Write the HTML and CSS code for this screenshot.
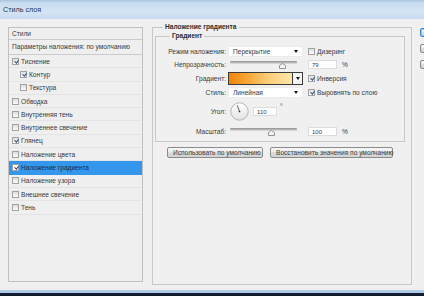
FILE: index.html
```html
<!DOCTYPE html>
<html>
<head>
<meta charset="utf-8">
<title>Стиль слоя</title>
<link rel="stylesheet" href="styles.css">
</head>
<body>
<div class="window">
	<div class="titlebar">Стиль слоя</div>

	<div class="content">
		<div class="styles-list">
			<div class="list-head">Стили</div>
			<div class="list-head params">Параметры наложения: по умолчанию</div>
			<div class="item"><span class="chk on"></span>Тиснение</div>
			<div class="item sub"><span class="chk on"></span>Контур</div>
			<div class="item sub"><span class="chk"></span>Текстура</div>
			<div class="item"><span class="chk"></span>Обводка</div>
			<div class="item"><span class="chk"></span>Внутренняя тень</div>
			<div class="item"><span class="chk"></span>Внутреннее свечение</div>
			<div class="item"><span class="chk on"></span>Глянец</div>
			<div class="item"><span class="chk"></span>Наложение цвета</div>
			<div class="item selected"><span class="chk on"></span>Наложение градиента</div>
			<div class="item"><span class="chk"></span>Наложение узора</div>
			<div class="item"><span class="chk"></span>Внешнее свечение</div>
			<div class="item"><span class="chk"></span>Тень</div>
		</div>

		<fieldset class="group">
			<legend>Наложение градиента</legend>
			<fieldset class="group inner">
				<legend>Градиент</legend>
				<div class="form">
					<span class="lbl">Режим наложения:</span>
					<div class="select">Перекрытие</div>
					<div class="opt"><span class="chk"></span>Дизеринг</div>

					<span class="lbl">Непрозрачность:</span>
					<div class="slider"><svg class="thumb" style="left: 79%" viewBox="0 0 7 6"><path d="M0.5 5.5V2.5L3.5 0.5L6.5 2.5V5.5Z"/></svg></div>
					<div class="num"><span class="field">79</span>%</div>

					<span class="lbl">Градиент:</span>
					<div class="gradient"><span class="swatch"></span><span class="drop"></span></div>
					<div class="opt"><span class="chk on"></span>Инверсия</div>

					<span class="lbl">Стиль:</span>
					<div class="select">Линейная</div>
					<div class="opt"><span class="chk on"></span>Выровнять по слою</div>

					<span class="lbl">Угол:</span>
					<div class="angle">
						<svg class="dial" viewBox="0 0 20 20">
							<defs>
								<linearGradient id="dialfill" x1="0" y1="0" x2="0" y2="1">
									<stop offset="0" stop-color="#ffffff"/>
									<stop offset="1" stop-color="#e2e2e2"/>
								</linearGradient>
							</defs>
							<circle cx="10" cy="10" r="9.2" fill="url(#dialfill)" stroke="#a2a2a2" stroke-width="0.8"/>
							<line x1="10" y1="10" x2="7.6" y2="3.4" stroke="#333" stroke-width="0.8"/>
							<circle cx="10" cy="10" r="0.9" fill="#333"/>
						</svg>
						<span class="field">110</span><span class="deg">°</span>
					</div>
					<span></span>

					<span class="lbl">Масштаб:</span>
					<div class="slider"><svg class="thumb" style="left: 62%" viewBox="0 0 7 6"><path d="M0.5 5.5V2.5L3.5 0.5L6.5 2.5V5.5Z"/></svg></div>
					<div class="num"><span class="field">100</span>%</div>
				</div>
			</fieldset>

			<div class="buttons">
				<div class="btn">Использовать по умолчанию</div>
				<div class="btn">Восстановить значения по умолчанию</div>
			</div>
		</fieldset>

		<!-- OK / cancel column, cut off by the window edge -->
		<div class="side">
			<div class="btn focus"></div>
			<div class="btn"></div>
			<div class="btn"></div>
		</div>
	</div>

	<div class="frame-bottom"></div>
</div>
</body>
</html>
```

FILE: styles.css
```css
* {
	box-sizing: border-box;
}

html, body {
	margin: 0;
	padding: 0;
}

body {
	width: 424px;
	height: 296px;
	overflow: hidden;
	background: #f0f0f0;
	color: #3a3a3a;
	font-family: "Liberation Sans", Arial, sans-serif;
	font-size: 6.6px;
}

.window {
	display: flex;
	flex-direction: column;
	height: 296px;
}

.titlebar {
	flex: none;
	height: 20px;
	padding-left: 3px;
	line-height: 19px;
	font-size: 7.2px;
	color: #24364a;
	background: linear-gradient(#a9c3dc, #c8dcef 15%, #d3e4f4 60%, #cadcef);
	border-bottom: 1px solid #eaf0f6;
}

.content {
	flex: 1;
	display: flex;
	align-items: flex-start;
	gap: 8px;
	padding: 3px 0 0 8px;
	overflow: hidden;
}

.frame-bottom {
	flex: none;
	height: 6px;
	background: linear-gradient(#b6d0ea 0, #a9c6e4 50%, #16243a 50%, #0d1828);
}

/* left list */

.styles-list {
	flex: none;
	width: 135px;
	height: 255px;
	margin: 4px 1px 0 0;
	border: 1px solid #c0c0c0;
	background: #efefef;
}

.list-head {
	height: 12px;
	padding-left: 3px;
	line-height: 11px;
	border-bottom: 1px solid #cbcbcb;
}

.list-head.params {
	height: 15px;
	line-height: 14px;
}

.item {
	display: flex;
	align-items: center;
	gap: 2px;
	height: 13.3px;
	padding-left: 3px;
	border-bottom: 1px solid #e4e4e4;
}

.item.sub {
	padding-left: 11px;
}

.item.selected {
	background: #3597ec;
	border-bottom-color: #3597ec;
	color: #1a2a40;
}

.chk {
	position: relative;
	flex: none;
	width: 7px;
	height: 7px;
	border: 1px solid #a2a2a2;
	background: linear-gradient(#dedede, #fbfbfb);
}

.chk.on::after {
	content: "";
	position: absolute;
	left: 1.6px;
	top: 0;
	width: 1.6px;
	height: 3.4px;
	border-right: 1px solid #2a4580;
	border-bottom: 1px solid #2a4580;
	transform: rotate(38deg);
}

.selected .chk {
	background: #fff;
}

/* group boxes */

fieldset.group {
	flex: none;
	width: 260px;
	height: 262px;
	margin: 0;
	padding: 1px 6px 0 2px;
	min-inline-size: 0;
	border: 1px solid #c8c8c8;
}

fieldset.group legend {
	margin-left: 8px;
	padding: 0 2px;
	line-height: 8px;
	font-weight: bold;
	color: #2c2c2c;
}

fieldset.group.inner {
	width: 250px;
	height: 110px;
	padding: 5px 0 0 0;
}

fieldset.group.inner legend {
	margin-left: 14px;
}

.form {
	display: grid;
	grid-template-columns: 70px 75px 1fr;
	grid-template-rows: 13px 13px 14px 15px 23px 17px;
	column-gap: 2px;
	align-items: center;
}

.lbl {
	text-align: right;
	white-space: nowrap;
}

.select {
	display: flex;
	align-items: center;
	justify-content: space-between;
	height: 11px;
	padding: 0 4px 0 4px;
	background: #fff;
	border: 1px solid #ececec;
}

.select::after,
.drop::after {
	content: "";
	border-left: 2.5px solid transparent;
	border-right: 2.5px solid transparent;
	border-top: 3px solid #111;
}

.opt {
	display: flex;
	align-items: center;
	gap: 2px;
	margin-left: 3px;
	white-space: nowrap;
}

.slider {
	position: relative;
	height: 8px;
	margin: 0 6px 0 2px;
}

.slider::before {
	content: "";
	position: absolute;
	left: 0;
	right: 0;
	top: 0;
	height: 3px;
	border-radius: 1px;
	background: linear-gradient(#8e8e8e, #bdbdbd 60%, #e8e8e8);
}

.thumb {
	position: absolute;
	top: 2px;
	width: 7px;
	height: 6px;
	margin-left: -3.5px;
	fill: #f5f5f5;
	stroke: #7c7c7c;
	stroke-width: 0.8;
}

.num {
	display: flex;
	align-items: center;
	gap: 5px;
	margin-left: 3px;
}

.field {
	display: block;
	width: 29px;
	height: 9px;
	padding-left: 3px;
	line-height: 8px;
	font-size: 6px;
	background: #fff;
	border: 1px solid #dcdcdc;
}

.gradient {
	display: flex;
	height: 13px;
	border: 1px solid #3a3a3a;
}

.swatch {
	flex: 1;
	border-right: 1px solid #3a3a3a;
	background: linear-gradient(90deg, #f0840a, #f6a838 30%, #fbd07e 65%, #fde6a8);
}

.drop {
	display: flex;
	align-items: center;
	justify-content: center;
	width: 9px;
	background: #f4f4f4;
}

.angle {
	display: flex;
	align-items: center;
	padding-left: 2px;
}

.dial {
	width: 19px;
	height: 19px;
	margin-right: 4px;
}

.angle .field {
	width: 24px;
}

.deg {
	align-self: flex-start;
	margin: 1px 0 0 3px;
}

/* buttons */

.buttons {
	display: flex;
	justify-content: center;
	gap: 7px;
	margin-top: 5px;
}

.btn {
	height: 11px;
	padding: 0 5px;
	line-height: 9px;
	text-align: center;
	white-space: nowrap;
	border: 1px solid #8b8b8b;
	border-radius: 2px;
	background: linear-gradient(#f7f7f7, #ebebeb 45%, #dcdcdc 50%, #d3d3d3);
}

.buttons .btn:first-child {
	width: 96px;
}

.buttons .btn:last-child {
	width: 123px;
}

.side {
	flex: none;
	display: flex;
	flex-direction: column;
	gap: 7px;
	width: 60px;
	margin-top: 5px;
}

.side .btn {
	height: 9px;
}

.side .btn.focus {
	border-color: #3c86c4;
	box-shadow: inset 0 0 0 1px #7fd0f4;
}
```
